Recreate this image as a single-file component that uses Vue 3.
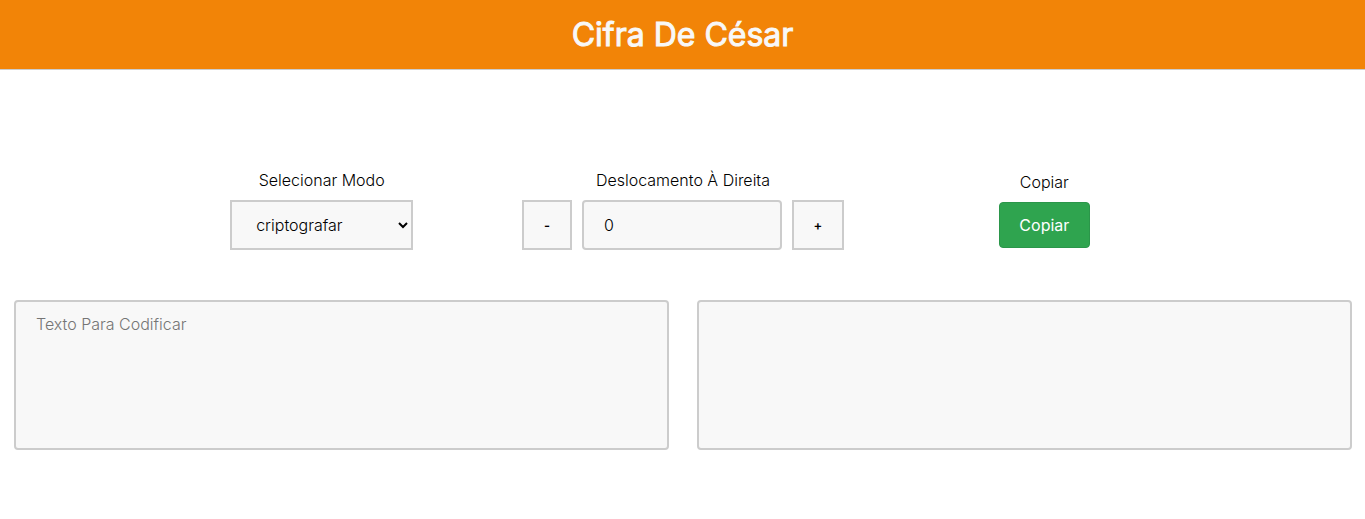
<script setup>
import { ref, computed } from 'vue'

const mode = ref('criptografar')
const shift = ref(0)
const source = ref('')

const rotate = (text, amount) =>
  text.replace(/[a-z]/gi, (char) => {
    const base = char <= 'Z' ? 65 : 97
    const index = (char.charCodeAt(0) - base + amount) % 26
    return String.fromCharCode(base + ((index + 26) % 26))
  })

const result = computed(() =>
  rotate(source.value, mode.value === 'criptografar' ? Number(shift.value) : -Number(shift.value))
)

const copy = () => navigator.clipboard?.writeText(result.value)
</script>

<template>
  <header class="header">
    <h1>Cifra De César</h1>
  </header>
  <main>
    <section class="controls">
      <div class="group">
        <label for="mode">Selecionar Modo</label>
        <select id="mode" v-model="mode" class="field mode">
          <option>criptografar</option>
          <option>descriptografar</option>
        </select>
      </div>
      <div class="group">
        <label for="shift">Deslocamento À Direita</label>
        <div class="stepper">
          <button type="button" class="step minus" @click="shift--">-</button>
          <input id="shift" v-model="shift" type="text" class="field shift" />
          <button type="button" class="step plus" @click="shift++">+</button>
        </div>
      </div>
      <div class="group">
        <label for="copy">Copiar</label>
        <button id="copy" type="button" class="copy" @click="copy">Copiar</button>
      </div>
    </section>
    <section class="texts">
      <textarea v-model="source" class="field area" placeholder="Texto Para Codificar" aria-label="Texto Para Codificar"></textarea>
      <textarea :value="result" class="field area" readonly aria-label="Resultado"></textarea>
    </section>
  </main>
</template>

<style>
body {
  margin: 0;
  background: #fff;
  color: #000;
  font-family: Inter, "Liberation Sans", sans-serif;
  font-size: 16px;
  font-weight: 300;
}
</style>

<style scoped>
.header {
  box-sizing: border-box;
  height: 70px;
  display: flex;
  align-items: center;
  justify-content: center;
  background: #f28407;
  border-bottom: 1px solid #ccc;
}
h1 {
  margin: 0;
  color: #f8f8f8;
  font-size: 32px;
  line-height: 40px;
  font-weight: 400;
  -webkit-text-stroke: 1px #f8f8f8;
}
.controls {
  display: grid;
  grid-template-columns: repeat(3, 1fr);
  align-items: center;
  padding: 100px 140px 50px 141px;
}
.group {
  display: flex;
  flex-direction: column;
  align-items: center;
  gap: 10px;
}
.group label {
  line-height: 20px;
}
.field,
.step {
  box-sizing: border-box;
  border: 2px solid #ccc;
  background: #f8f8f8;
  color: #000;
  font-family: inherit;
  font-size: 16px;
  font-weight: 300;
}
.mode {
  width: 183px;
  height: 50px;
  padding: 0 0 0 20px;
  border-radius: 0;
}
.stepper {
  display: flex;
  gap: 10px;
}
.step {
  height: 50px;
  padding: 0;
  font-size: 13px;
  font-weight: 600;
}
.minus {
  width: 50px;
}
.plus {
  width: 52px;
}
.shift {
  width: 200px;
  height: 50px;
  padding: 12px 20px;
  border-radius: 4px;
}
.copy {
  width: 91px;
  height: 46px;
  padding: 0;
  border: 1px solid #2b964a;
  border-radius: 4px;
  background: #2fa44f;
  color: #fff;
  font-family: inherit;
  font-size: 16px;
  font-weight: 400;
}
.texts {
  display: grid;
  grid-template-columns: 1fr 1fr;
  gap: 28px;
  padding: 0 13px 0 14px;
}
.area {
  width: 100%;
  height: 150px;
  padding: 12px 20px;
  border-radius: 4px;
  line-height: 20px;
  resize: none;
}
</style>
